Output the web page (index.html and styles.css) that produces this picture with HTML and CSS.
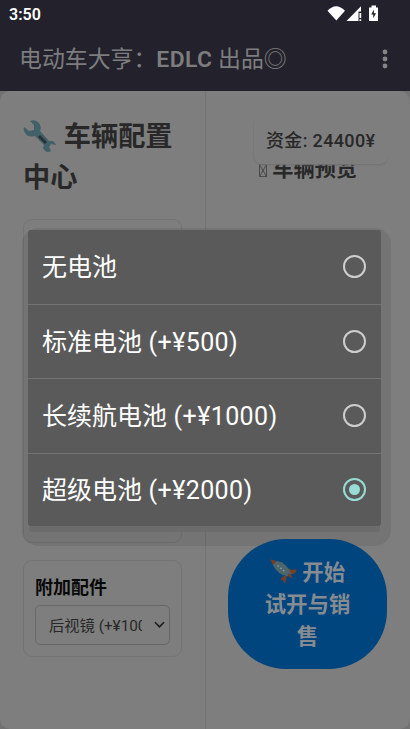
FILE: index.html
```html
<!DOCTYPE html>
<html lang="zh-CN">
<head>
<meta charset="utf-8">
<meta name="viewport" content="width=device-width">
<title>电动车大亨</title>
<link rel="stylesheet" href="styles.css">
</head>
<body>
<header class="top">
  <div class="status">
    <span>3:50</span>
    <svg class="signals" width="54" height="18" viewBox="0 0 54 18">
      <path fill="#fff" d="M.5 5.8Q9 -3.5 18 5.8L9.3 15.6Z"/>
      <path fill="#fff" d="M19.5 16L34 1.3V6.5H31.5V16ZM32.5 8h1.7v5h-1.7zM32.5 14.2h1.7V16h-1.7z"/>
      <path fill="#fff" d="M42 2.5h2.5V.5H49v2h2v13.5h-9z"/>
      <path fill="#23222c" d="M46.9 4.5l-2.7 5h2v3.8l2.9-5h-2.2z"/>
    </svg>
  </div>
  <div class="appbar">
    <h1>电动车大亨：<b>EDLC</b> 出品◎</h1>
    <svg class="more" width="6" height="20" viewBox="0 0 6 20" fill="#858587"><circle cx="3" cy="3" r="2.4"/><circle cx="3" cy="10" r="2.4"/><circle cx="3" cy="17" r="2.4"/></svg>
  </div>
</header>
<main class="page">
  <section class="config">
    <h2><svg class="wrench" width="34" height="34" viewBox="0 0 34 34">
      <path fill="#426067" d="M7 1Q12-1 16 3Q19 7 17 11L26 21Q31 20 33 25L28 24L26 27L28 31Q23 34 20 28L21 25L12 16Q5 18 2 13Q0 10 1 7L6 11L11 10L11 5Z"/>
      <path stroke="#293236" stroke-width="3" d="M16 16L23 23"/>
    </svg> 车辆配置中心</h2>
    <div class="parts"><div class="inner-select"></div></div>
    <div class="extras">
      <h3>附加配件</h3>
      <div class="select"><span>后视镜 (+¥100)</span>
        <svg width="11" height="8" viewBox="0 0 11 8" fill="none" stroke="#1c1c1c" stroke-width="1.6"><path d="M1 1.3L5.5 5.8L10 1.3"/></svg>
      </div>
    </div>
  </section>
  <section class="preview">
    <h2><svg width="8" height="13" viewBox="0 0 8 13" fill="none" stroke="#3c3c3c" stroke-width=".8"><path d="M.5.5h7v12h-7zL7.5 12.5M7.5.5L.5 12.5"/></svg> 车辆预览</h2>
    <button class="start"><svg width="27" height="26" viewBox="0 0 27 26">
      <path fill="#763e26" d="M17 13L20 9.5L22 11L26.5 10L25.5 14L20 16ZM12 18L17 16L16 21L14.5 25L13 21L10.500 21Z"/>
      <path fill="#4b666c" d="M2.500 5.500L6.500 1.800Q17 4 21 14.500L18.500 17.500Q8 16.500 2.500 5.500Z"/>
      <path fill="#763e26" d="M.3.3L6.800 2L3.200 6Z"/>
      <path stroke="#763e26" stroke-width="2" d="M18 15L22 18.500"/>
      <path stroke="#87969a" stroke-width="1.6" stroke-dasharray="1.6 2" d="M7.500 6.500L16 13.500"/>
    </svg> 开始<br>试开与销<br>售</button>
  </section>
  <div class="money">资金: 24400¥</div>
</main>
<div class="shade"></div>
<div class="dialog" role="listbox">
  <div class="option"><span>无电池</span><i></i></div>
  <div class="option"><span>标准电池<em> (+¥500)</em></span><i></i></div>
  <div class="option"><span>长续航电池<em> (+¥1000)</em></span><i></i></div>
  <div class="option"><span>超级电池<em> (+¥2000)</em></span><i class="on"></i></div>
</div>
</body>
</html>
```
FILE: styles.css
```css
* { box-sizing: border-box; }
body {
  margin: 0; width: 410px; height: 729px; overflow: hidden; position: relative;
  display: flex; flex-direction: column;
  background: #727272; color: #282828;
  font-family: Roboto, "Noto Sans CJK SC", sans-serif;
}
h1, h2, h3 { margin: 0; }
.top { height: 91px; background: #23222c; flex: none; }
.status {
  height: 28px; padding: 0 29px 0 9px; display: flex; justify-content: space-between;
  color: #fff; font-size: 16px; font-weight: 600; line-height: 29px;
}
.signals { margin-top: 5px; }
.appbar {
  height: 63px; padding: 0 22px 0 19px; display: flex; justify-content: space-between; align-items: center;
}
.appbar h1 { font-size: 22.9px; font-weight: 400; color: #7d7d7f; line-height: 62px; white-space: nowrap; }
.appbar b { font-weight: 600; letter-spacing: .4px; }
.more { margin-top: -1px; }
.page {
  flex: 1; display: grid; grid-template-columns: 205px 205px;
  background: #7e7e7e; border-radius: 10px; position: relative;
}
.config { padding: 26px 23px 0; }
.config h2 { font-size: 27.2px; line-height: 41px; font-weight: 700; height: 82px; margin-right: -10px; }
.wrench { vertical-align: -8px; }
.parts {
  margin-top: 20px; height: 324px; border: 1px solid #747474; border-radius: 9px;
  padding: 0 11px 11px; display: flex; align-items: flex-end;
}
.inner-select { width: 100%; height: 38px; border: 1px solid #646464; border-radius: 5px; }
.extras { margin-top: 17px; height: 97px; border: 1px solid #747474; border-radius: 9px; padding: 13px 11px; }
.extras h3 { font-size: 18px; line-height: 27px; color: #080808; }
.select {
  margin-top: 4px; height: 40px; border: 1px solid #686868; border-radius: 5px;
  padding: 0 4px 2px 13px; display: flex; align-items: center; justify-content: space-between;
  font-size: 15.3px;
}
.select span { width: 93px; overflow: hidden; white-space: nowrap; }
.select svg { position: relative; top: 1px; }
.preview { border-left: 1px solid #747474; padding: 63px 22px 0; }
.preview h2 { font-size: 21.2px; line-height: 30px; text-align: center; white-space: nowrap; }
.preview h2 svg { vertical-align: -1px; }
.start {
  display: block; position: relative; z-index: 2; margin: 355px 0 0; width: 159px; height: 130px;
  border: 0; border-radius: 58px; background: #00457e; color: #858b91;
  font: 700 21.4px/32px Roboto, "Noto Sans CJK SC", sans-serif;
  text-align: center; padding: 1px 0 0;
}
.start svg { vertical-align: -5px; }
.money {
  position: absolute; left: 254px; top: 24px; width: 134px; height: 49px; padding-left: 12px;
  background: #7e7e7e; border-radius: 8px;
  box-shadow: -1px 1px 0 -0.5px #767676, 0 2px 2px -1px #707070;
  font-size: 18px; line-height: 51px; font-weight: 500; letter-spacing: .35px; white-space: nowrap;
}
.shade {
  position: absolute; left: 22px; top: 228px; width: 369px; height: 318px;
  background: rgba(0, 0, 0, .08); border-radius: 16px;
}
.dialog {
  position: absolute; z-index: 3; left: 28px; top: 230px; width: 353px; height: 296px;
  background: #5a5a5a; border-radius: 3px; box-shadow: 0 7px 0 -1px #6c6c6c;
}
.option {
  height: 74.5px; padding: 0 15px 0 14px; display: flex; align-items: center; justify-content: space-between;
  border-bottom: 1.5px solid #747474; color: #fff; font-size: 25px; line-height: 36px; white-space: nowrap;
}
.option span { padding-top: 3px; }
.option em { font-style: normal; letter-spacing: .4px; }
.option:last-child { border-bottom: 0; height: 72.5px; }
.option i {
  width: 23px; height: 23px; border: 2px solid #cecece; border-radius: 50%;
  display: grid; place-items: center;
}
.option .on { border-color: #98dcd5; }
.on::after { content: ""; width: 11px; height: 11px; border-radius: 50%; background: #98dcd5; }
```
